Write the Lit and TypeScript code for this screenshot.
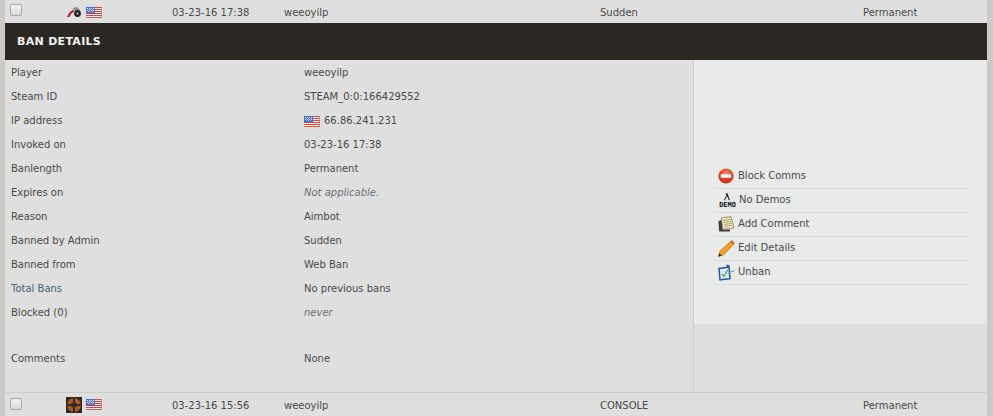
import { LitElement, html, css, svg } from "lit";
import { customElement } from "lit/decorators.js";

const flag = html`<svg class="flag" width="16" height="11" viewBox="0 0 16 11">
  <rect width="16" height="11" fill="#fbf4f4" />
  ${[0, 2, 4, 6, 8].map((y) => svg`<rect y=${y} width="16" height="1" fill="#ee3f30" />`)}
  <rect y="10" width="16" height="1" fill="#e0553f" />
  <rect width="9" height="6" fill="#3a6cf0" />
  ${[1, 3].map((y) => [1, 3, 5, 7].map((x) => svg`<rect x=${x} y=${y} width="1" height="1" fill="#eef2fe" />`))}
  ${[2, 4].map((y) => [2, 4, 6].map((x) => svg`<rect x=${x} y=${y} width="1" height="1" fill="#a9bcf6" />`))}
  <rect x="15" width="1" height="11" fill="#a8706a" opacity=".5" />
</svg>`;

const motorcycle = html`<svg width="16" height="12" viewBox="-1 0 16 12">
  <path d="M0 11 L2 7 L6 3.5 L7.5 5 L4 8 L2.6 11Z" fill="#b5262a" />
  <path d="M5.5 2 L9.5 1 L13.5 4 L8 4.5Z" fill="#8d8d8d" />
  <circle cx="10.5" cy="7.5" r="3.4" fill="#222" />
  <circle cx="10.5" cy="7.5" r="1.1" fill="#c4c4c4" />
</svg>`;

const tf2 = html`<svg width="16" height="16" viewBox="0 0 16 16">
  <rect width="16" height="16" fill="#2e2a26" />
  <circle cx="8" cy="8" r="7" fill="#ad5a22" />
  <path d="M7 0 H9 V5.5 H7Z M7 10.5 H9 V16 H7Z M0 7 H5.5 V9 H0Z M10.5 7 H16 V9 H10.5Z" fill="#2e2a26" />
  <circle cx="8" cy="8" r="2.8" fill="#2e2a26" />
</svg>`;

const block = html`<svg width="17" height="16" viewBox="0 0 17 16">
  <defs>
    <radialGradient id="rd" cx=".5" cy=".3" r=".8">
      <stop offset="0" stop-color="#f08a6c" />
      <stop offset=".5" stop-color="#e2401f" />
      <stop offset="1" stop-color="#c22a12" />
    </radialGradient>
  </defs>
  <circle cx="8" cy="8" r="7.6" fill="url(#rd)" />
  <rect x="2.8" y="6.3" width="10.4" height="3.4" fill="#fff" />
</svg>`;

const demo = html`<svg width="17" height="16" viewBox="0 0 17 16">
  <path d="M6.8 1 H8.3 L11 8.2 H9.9 L8 4 L5.8 8.2 H4.8 L7.4 3.2Z" fill="#222" />
  <text class="demo-text" x="0.2" y="14.6" textLength="16.6" lengthAdjust="spacingAndGlyphs">DEMO</text>
</svg>`;

const comment = html`<svg width="17" height="16" viewBox="0 0 17 16">
  <path d="M0.5 5 L4 4 L4.5 13.5 L12 13.5 L12 15.6 L1 15.6Z" fill="#3f3f3f" />
  <path d="M3.2 2 L13 0.6 L16 12 L5 13.4Z" fill="#f1e9b9" stroke="#77714f" stroke-width=".7" />
  <path d="M5 4.5 L13 3.3 M5.5 6.5 L13.5 5.3 M6 8.5 L14 7.3 M6.3 10.5 L14.3 9.3" stroke="#9a9470" stroke-width=".8" />
</svg>`;

const pencil = html`<svg width="17" height="17" viewBox="0 0 17 17">
  <path d="M0.5 16.5 L2 11 L12.5 1.5 L15.5 4.5 L5.5 15Z" fill="#f2a01d" stroke="#a8650f" stroke-width=".6" />
  <path d="M12.5 1.2 L14 0.2 L16.8 3 L15.6 4.6Z" fill="#d8545c" />
  <path d="M0.5 16.5 L1.4 13.2 L3.6 15.4Z" fill="#222" />
</svg>`;

const unban = html`<svg width="17" height="17" viewBox="0 0 17 17">
  <path d="M1 4.5 L11 3 L12 14.5 L2 16Z" fill="#dce8f6" stroke="#1f55ad" stroke-width="1.5" />
  <path d="M3.8 10 L5.8 12.4 L9.6 6" fill="none" stroke="#4a9a4a" stroke-width="1.1" />
  <path d="M8 0.5 L12 1.5 L10 4.5Z" fill="#1f55ad" />
  <path d="M10.5 9.5 L13 7.5 L16.5 6.8" fill="none" stroke="#7c96c4" stroke-width="1.1" />
</svg>`;

const actions = [
  { icon: block, label: "Block Comms" },
  { icon: demo, label: "No Demos", shift: true },
  { icon: comment, label: "Add Comment" },
  { icon: pencil, label: "Edit Details" },
  { icon: unban, label: "Unban" },
];

@customElement("app-root")
export class AppRoot extends LitElement {
  static styles = css`
    :host {
      display: block;
      height: 416px;
      overflow: hidden;
      background: #cdc9c4;
      padding: 0 6px 0 5px;
      box-sizing: border-box;
      font-family: "DejaVu Sans", Verdana, sans-serif;
      font-size: 10px;
      color: #4a4a4a;
    }
    .row {
      display: grid;
      grid-template-columns: 61px 36px 70px 112px 316px 263px 1fr;
      height: 23px;
      align-items: center;
      background: #dfdfdf;
    }
    .row.first {
      padding-top: 1px;
      height: 22px;
    }
    .row.first .check {
      margin-top: -5px;
    }
    .row.last {
      border-top: 1px solid #cecbc7;
      padding-top: 1px;
      height: 22px;
    }
    .row.last .check {
      margin-top: -2px;
    }
    .row.last .icons {
      margin-top: -1px;
    }
    .check {
      width: 10px;
      height: 10px;
      margin-left: 5px;
      border: 1px solid #a9a9a9;
      border-radius: 2px;
      background: linear-gradient(#f2f2f2, #d8d8d8);
    }
    .icons {
      display: flex;
      align-items: center;
      justify-content: flex-end;
      gap: 4px;
    }
    .head {
      height: 37px;
      background: #2b2722;
      color: #f4f4f4;
      font-weight: bold;
      font-size: 11px;
      letter-spacing: 0.3px;
      line-height: 38px;
      padding-left: 12px;
    }
    .details {
      display: flex;
      height: 332px;
      background: #dfdfdf;
    }
    .info {
      width: 689px;
      border-right: 1px solid #cecece;
      padding: 1px 6px;
      box-sizing: border-box;
    }
    .line {
      display: grid;
      grid-template-columns: 293px 1fr;
      height: 24px;
      line-height: 24px;
    }
    .line.gap {
      margin-top: 22px;
    }
    .ip {
      display: flex;
      align-items: center;
      gap: 4px;
    }
    .muted {
      font-style: italic;
      color: #6d7277;
    }
    .link {
      color: #47607c;
    }
    .side {
      flex: 1;
    }
    .panel {
      height: 264px;
      background: #e9ebea;
      padding: 105px 19px 0;
      box-sizing: border-box;
    }
    .action {
      display: flex;
      align-items: center;
      gap: 3px;
      height: 22px;
      border-bottom: 1px solid #dcdedd;
      padding: 0 0 1px 5px;
    }
    .action.shift {
      padding-left: 6px;
    }
    .action svg {
      flex: none;
    }
    .action span {
      margin-top: -1px;
    }
    .demo-text {
      font-family: "DejaVu Sans Mono", monospace;
      font-size: 7px;
      font-weight: bold;
      fill: #111;
    }
  `;

  render() {
    const lines: [string, unknown, string?][] = [
      ["Player", "weeoyilp"],
      ["Steam ID", "STEAM_0:0:166429552"],
      ["IP address", html`<span class="ip">${flag} 66.86.241.231</span>`],
      ["Invoked on", "03-23-16 17:38"],
      ["Banlength", "Permanent"],
      ["Expires on", html`<span class="muted">Not applicable.</span>`],
      ["Reason", "Aimbot"],
      ["Banned by Admin", "Sudden"],
      ["Banned from", "Web Ban"],
      ["Total Bans", "No previous bans", "link"],
      ["Blocked (0)", html`<span class="muted">never</span>`],
      ["Comments", "None", "gap"],
    ];
    return html`
      <div class="row first">
        <div class="check"></div>
        <div class="icons">${motorcycle}${flag}</div>
        <div></div>
        <div>03-23-16 17:38</div>
        <div>weeoyilp</div>
        <div>Sudden</div>
        <div>Permanent</div>
      </div>
      <div class="head">BAN DETAILS</div>
      <div class="details">
        <div class="info">
          ${lines.map(
            ([k, v, c]) => html`<div class="line ${c === "gap" ? "gap" : ""}">
              <span class=${c === "link" ? "link" : ""}>${k}</span><span>${v}</span>
            </div>`
          )}
        </div>
        <div class="side">
          <div class="panel">
            ${actions.map(
              (a) => html`<div class="action ${a.shift ? "shift" : ""}">${a.icon}<span>${a.label}</span></div>`
            )}
          </div>
        </div>
      </div>
      <div class="row last">
        <div class="check"></div>
        <div class="icons">${tf2}${flag}</div>
        <div></div>
        <div>03-23-16 15:56</div>
        <div>weeoyilp</div>
        <div>CONSOLE</div>
        <div>Permanent</div>
      </div>
    `;
  }
}
